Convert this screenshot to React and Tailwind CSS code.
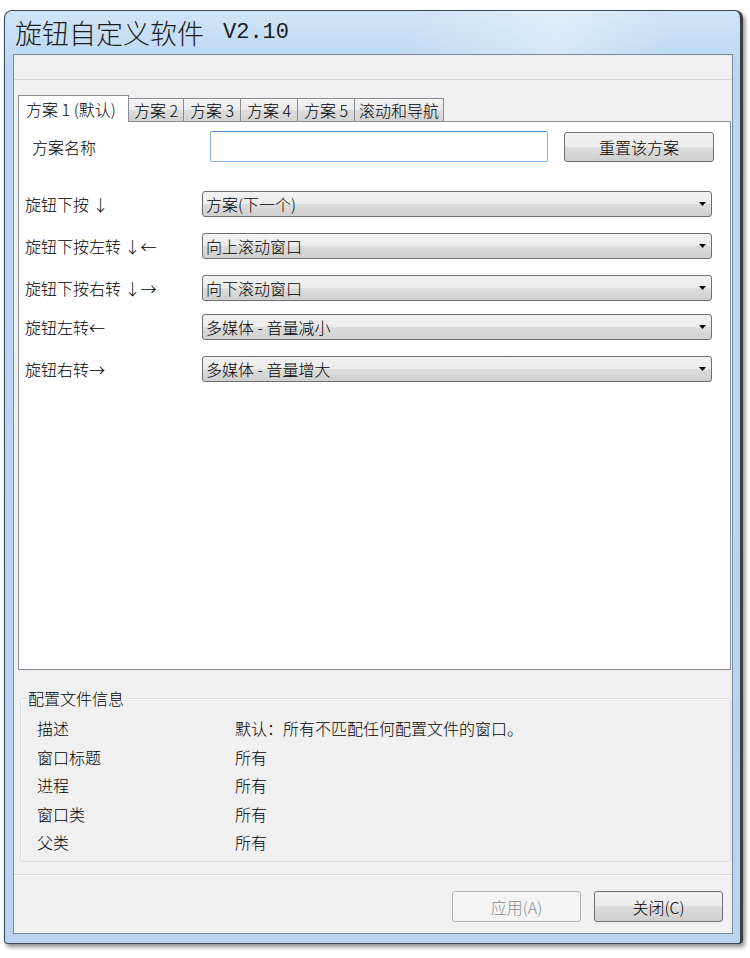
import React from 'react';

const FONT = { fontFamily: '"Noto Sans CJK SC", "Liberation Sans", sans-serif' };

const tabs = [
  { label: '方案 1 (默认)', w: 'w-[111px]', active: true },
  { label: '方案 2', w: 'w-[56px]' },
  { label: '方案 3', w: 'w-[58px]' },
  { label: '方案 4', w: 'w-[58px]' },
  { label: '方案 5', w: 'w-[58px]' },
  { label: '滚动和导航', w: 'w-[90px]' },
];

const actions = [
  { label: '旋钮下按 ↓', value: '方案(下一个)', mt: 'mt-[29px]' },
  { label: '旋钮下按左转 ↓←', value: '向上滚动窗口', mt: 'mt-[16px]' },
  { label: '旋钮下按右转 ↓→', value: '向下滚动窗口', mt: 'mt-[16px]' },
  { label: '旋钮左转←', value: '多媒体 - 音量减小', mt: 'mt-[13px]' },
  { label: '旋钮右转→', value: '多媒体 - 音量增大', mt: 'mt-[16px]' },
];

const info = [
  ['描述', '默认：所有不匹配任何配置文件的窗口。'],
  ['窗口标题', '所有'],
  ['进程', '所有'],
  ['窗口类', '所有'],
  ['父类', '所有'],
];

const btnBg =
  'bg-[linear-gradient(to_bottom,#f2f2f2_0%,#ebebeb_50%,#dddddd_50%,#cfcfcf_100%)]';

function Select({ value }) {
  return (
    <div className={`w-[510px] h-[26px] flex items-center justify-between rounded-[3px] border border-[#707070] ${btnBg} pl-[3px] pr-[5px]`}>
      <span className="text-[16px] leading-[20px] font-light text-black">{value}</span>
      <svg width="7" height="4" viewBox="0 0 7 4">
        <path d="M0 0H7L3.5 4Z" fill="#000" />
      </svg>
    </div>
  );
}

export default function App() {
  return (
    <div className="w-[750px] h-[958px] bg-white overflow-hidden pt-[10px] pl-[4px]" style={FONT}>
      <div className="w-[739px] h-[934px] flex flex-col rounded-t-[8px] rounded-b-[4px] border border-[#3f4a55] border-r-[3px] border-r-[#3a3f45] bg-[linear-gradient(to_bottom,#cfe4f8_0%,#bad7f3_6%,#b7d4f1_100%)] shadow-[2px_3px_4px_rgba(0,0,0,0.45)]">
        {/* title bar */}
        <div className="h-[43px] flex items-center pl-[10px] bg-[linear-gradient(100deg,transparent_55%,rgba(255,255,255,0.35)_75%,transparent_90%)]">
          <span className="text-[27px] leading-[30px] font-light text-[#1c1c1c]">旋钮自定义软件</span>
          <span className="ml-[19px] text-[22px] leading-[30px] text-[#1c1c1c]" style={{ fontFamily: '"Liberation Mono", monospace' }}>V2.10</span>
        </div>

        {/* client area */}
        <div className="ml-[8px] mr-[7px] mb-[9px] flex-1 flex flex-col border border-[#7d8a96] bg-[#f0f0f0]">
          <div className="h-[25px] border-b border-[#d9d9d9]" />

          <div className="mt-[15px] pl-[4px] pr-[1px] flex flex-col">
            {/* tabs */}
            <div className="flex items-end h-[26px]">
              {tabs.map(t =>
                t.active ? (
                  <div key={t.label} className={`${t.w} h-[27px] -mb-px relative z-10 bg-white border border-b-0 border-[#898c95] pl-[7px] flex items-center text-[16px] font-light text-black`}>
                    {t.label}
                  </div>
                ) : (
                  <div key={t.label} className={`${t.w} h-[23px] -ml-px border border-b-0 border-[#898c95] bg-[linear-gradient(to_bottom,#f3f3f3,#ebebeb_50%,#dddddd_50%,#d3d3d3)] flex items-center justify-center text-[16px] font-light text-black`}>
                    {t.label}
                  </div>
                )
              )}
            </div>

            {/* tab panel */}
            <div className="h-[549px] bg-white border border-[#898c95]">
              <div className="mt-[9px] flex items-center pl-[13px]">
                <span className="w-[178px] text-[16px] font-light text-black">方案名称</span>
                <div className="w-[338px] h-[31px] bg-white border border-[#7eb4ea] border-t-[#4d8ccb] rounded-[2px]" />
                <button className={`ml-[16px] w-[150px] h-[30px] rounded-[3px] border border-[#707070] ${btnBg} text-[16px] font-light text-black`}>
                  重置该方案
                </button>
              </div>

              {actions.map(a => (
                <div key={a.label} className={`${a.mt} flex items-center pl-[6px]`}>
                  <span className="w-[177px] text-[16px] font-light text-black whitespace-nowrap">{a.label}</span>
                  <Select value={a.value} />
                </div>
              ))}
            </div>
          </div>

          {/* profile info group */}
          <fieldset className="mt-[18px] ml-[6px] mr-[1px] h-[174px] border border-[#d5dfe5] rounded-[3px] shadow-[inset_1px_1px_0_#ffffff] px-0 pb-[4px]">
            <legend className="ml-[5px] px-[2px] text-[16px] leading-[20px] font-light text-black">配置文件信息</legend>
            <div className="mt-[6px] flex flex-col">
              {info.map(([k, v]) => (
                <div key={k} className="h-[28.5px] flex items-center pl-[16px] text-[16px] font-light text-black">
                  <span className="w-[198px]">{k}</span>
                  <span>{v}</span>
                </div>
              ))}
            </div>
          </fieldset>

          <div className="mt-[12px] border-t border-[#d5d5d5] border-b border-b-white" />

          <div className="mt-[15px] flex justify-end gap-[13px] pr-[9px]">
            <button className="w-[129px] h-[31px] rounded-[3px] border border-[#adb2b5] bg-[#f4f4f4] text-[16px] font-light text-[#8d8d8d]">
              应用(A)
            </button>
            <button className={`w-[129px] h-[31px] rounded-[3px] border border-[#707070] ${btnBg} text-[16px] font-light text-black`}>
              关闭(C)
            </button>
          </div>
        </div>
      </div>
    </div>
  );
}
